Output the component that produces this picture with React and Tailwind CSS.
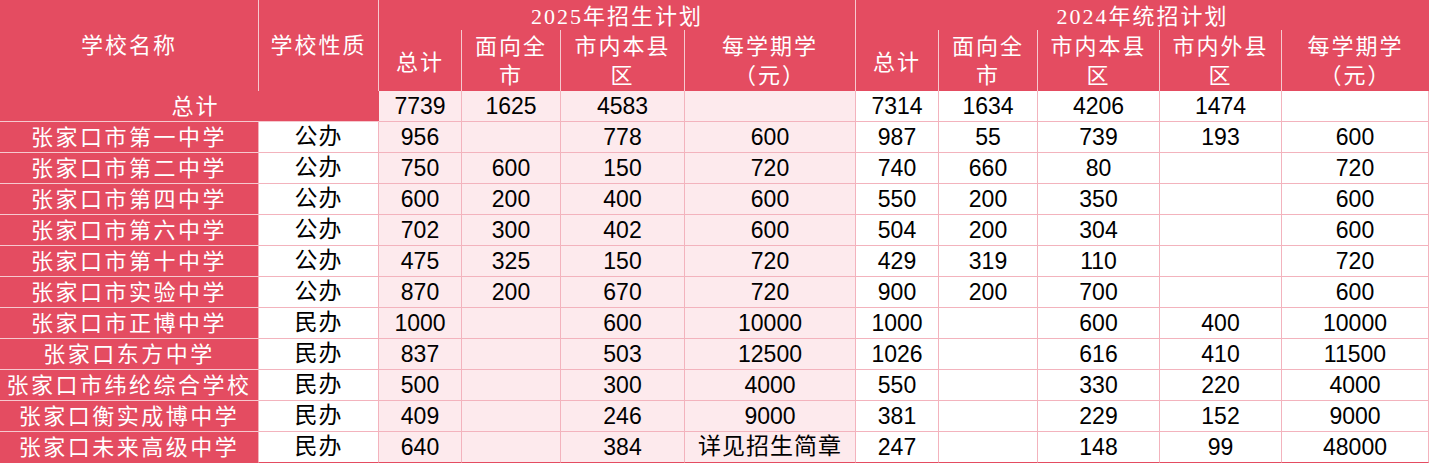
const rows = [
  ['张家口市第一中学', '公办', '956', '', '778', '600', '987', '55', '739', '193', '600'],
  ['张家口市第二中学', '公办', '750', '600', '150', '720', '740', '660', '80', '', '720'],
  ['张家口市第四中学', '公办', '600', '200', '400', '600', '550', '200', '350', '', '600'],
  ['张家口市第六中学', '公办', '702', '300', '402', '600', '504', '200', '304', '', '600'],
  ['张家口市第十中学', '公办', '475', '325', '150', '720', '429', '319', '110', '', '720'],
  ['张家口市实验中学', '公办', '870', '200', '670', '720', '900', '200', '700', '', '600'],
  ['张家口市正博中学', '民办', '1000', '', '600', '10000', '1000', '', '600', '400', '10000'],
  ['张家口东方中学', '民办', '837', '', '503', '12500', '1026', '', '616', '410', '11500'],
  ['张家口市纬纶综合学校', '民办', '500', '', '300', '4000', '550', '', '330', '220', '4000'],
  ['张家口衡实成博中学', '民办', '409', '', '246', '9000', '381', '', '229', '152', '9000'],
  ['张家口未来高级中学', '民办', '640', '', '384', '详见招生简章', '247', '', '148', '99', '48000'],
];

const totals = ['7739', '1625', '4583', '', '7314', '1634', '4206', '1474', ''];

const serif = "font-['Liberation_Serif','Noto_Sans_CJK_SC',serif]";
const sans = "font-['Liberation_Sans','Noto_Sans_CJK_SC',sans-serif]";

const Head = ({ children, className = '' }) => (
  <div className={`flex flex-col items-center justify-center bg-[#e44c61] text-white text-[22px] leading-[29px] tracking-[2px] ${serif} ${className}`}>
    {children}
  </div>
);

const Cell = ({ children, pink, className = '' }) => (
  <div className={`flex items-center justify-center border-r border-b border-[#f3b3bd] text-[23px] text-black ${sans} ${pink ? 'bg-[#fdeaed]' : 'bg-white'} ${className}`}>
    {children}
  </div>
);

export default function App() {
  return (
    <div className="w-[1430px] h-[463px] overflow-hidden bg-white">
      <div className="grid grid-cols-[259px_120px_83px_99px_124px_171px_83px_99px_122px_122px_147px] grid-rows-[30px_61px_31px_repeat(11,31px)]">
        {/* header */}
        <Head className="row-span-2 border-r border-[#f6c9cf]">学校名称</Head>
        <Head className="row-span-2 border-r border-[#f6c9cf]">学校性质</Head>
        <Head className="col-span-4 border-r border-[#f6c9cf] pt-[2px]">2025年招生计划</Head>
        <Head className="col-span-5 pt-[2px]">2024年统招计划</Head>

        <Head className="border-r border-[#f6c9cf] pt-[4px]">总计</Head>
        <Head className="border-r border-[#f6c9cf]"><span>面向全</span><span>市</span></Head>
        <Head className="border-r border-[#f6c9cf]"><span>市内本县</span><span>区</span></Head>
        <Head className="border-r border-[#f6c9cf]"><span>每学期学</span><span>（元）</span></Head>
        <Head className="border-r border-[#f6c9cf] pt-[4px]">总计</Head>
        <Head className="border-r border-[#f6c9cf]"><span>面向全</span><span>市</span></Head>
        <Head className="border-r border-[#f6c9cf]"><span>市内本县</span><span>区</span></Head>
        <Head className="border-r border-[#f6c9cf]"><span>市内外县</span><span>区</span></Head>
        <Head><span>每学期学</span><span>（元）</span></Head>

        {/* totals */}
        <Head className="col-span-2 border-b border-[#f6c9cf] pl-[12px]">总计</Head>
        {totals.map((t, i) => (
          <Cell key={i} pink={i < 4}>{t}</Cell>
        ))}

        {/* data rows */}
        {rows.map((r, ri) => {
          const last = ri === rows.length - 1;
          return r.map((v, ci) => {
            if (ci === 0) {
              return (
                <div
                  key={`${ri}-${ci}`}
                  className={`flex items-center justify-center bg-[#e44c61] text-white text-[22px] tracking-[2.5px] border-r border-b ${last ? 'border-b-[#e44c61]' : 'border-b-[#f6c9cf]'} border-r-[#f3b3bd] ${serif}`}
                >
                  {v}
                </div>
              );
            }
            return (
              <Cell
                key={`${ri}-${ci}`}
                pink={ci >= 2 && ci <= 5}
                className={`${last ? 'border-b-[#e44c61]' : ''} ${ci === 1 || (ci === 5 && /[^\d]/.test(v)) ? "font-['Liberation_Serif','Noto_Sans_CJK_SC',serif] tracking-[1px] text-[22px]" : ''}`}
              >
                {v}
              </Cell>
            );
          });
        })}
      </div>
    </div>
  );
}
